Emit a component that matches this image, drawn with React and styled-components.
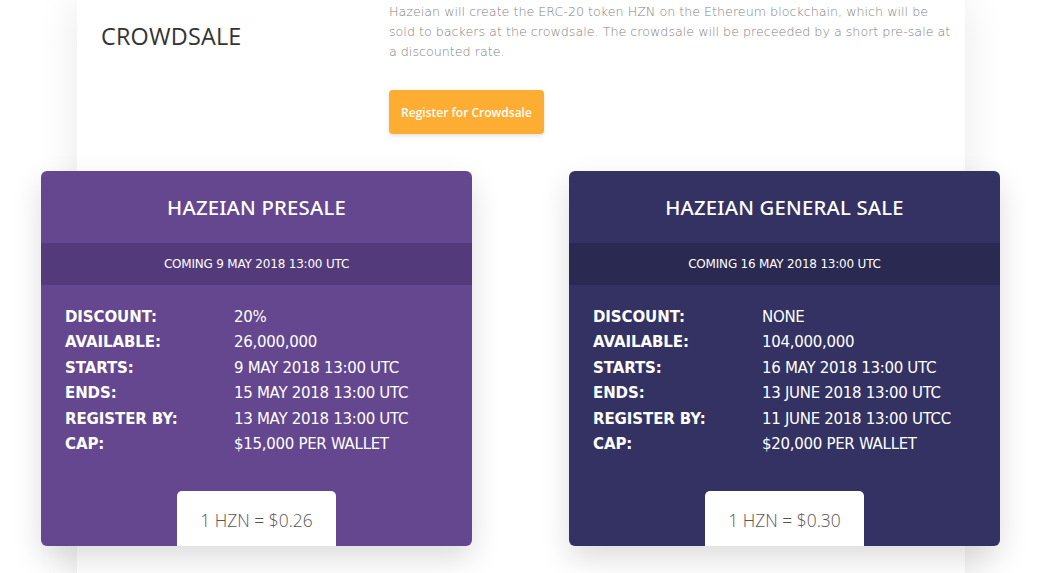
import React from "react";
import styled, { createGlobalStyle } from "styled-components";

const Global = createGlobalStyle`
  html, body { margin: 0; padding: 0; background: #ffffff; }
  body { width: 1043px; height: 573px; overflow: hidden; }
  * { box-sizing: border-box; }
`;

const Page = styled.div`
  width: 1043px;
  height: 573px;
  overflow: hidden;
  display: flex;
  justify-content: flex-start;
  padding-left: 77px;
`;

const Panel = styled.section`
  width: 888px;
  min-height: 640px;
  background: #fff;
  box-shadow: 0 0 40px rgba(0, 0, 0, 0.09);
  padding: 2px 0 0 24px;
  display: flex;
  flex-direction: column;
`;

const Intro = styled.div`
  display: grid;
  grid-template-columns: 288px 566px;
`;

const Heading = styled.h2`
  margin: 18px 0 0;
  font-family: "Open Sans", sans-serif;
  font-weight: 400;
  font-size: 23.4px;
  line-height: 32px;
  color: #333;
  letter-spacing: 0.2px;
`;

const Copy = styled.div`
  display: flex;
  flex-direction: column;
  align-items: flex-start;
`;

const Para = styled.p`
  margin: 0;
  font-family: "DejaVu Sans", sans-serif;
  font-weight: 200;
  font-size: 12.7px;
  line-height: 20px;
  color: #7f7f7f;
`;

const Button = styled.button`
  margin-top: 28px;
  width: 155px;
  height: 44px;
  border: 0;
  border-radius: 4px;
  background: #fdad31;
  color: #fff;
  font-family: "Open Sans", sans-serif;
  font-weight: 600;
  font-size: 12px;
  box-shadow: 0 2px 4px rgba(0, 0, 0, 0.12);
  padding: 0;
`;

const CardRow = styled.div`
  margin: 37px 0 0 -60px;
  width: 959px;
  display: flex;
  justify-content: space-between;
`;

const Card = styled.article`
  width: 431px;
  height: 375px;
  border-radius: 6px;
  background: ${(p) => p.$bg};
  box-shadow: 0 12px 30px rgba(0, 0, 0, 0.14);
  display: flex;
  flex-direction: column;
  overflow: hidden;
  color: #fff;
`;

const CardTitle = styled.h3`
  margin: 0;
  height: 72px;
  display: flex;
  align-items: center;
  justify-content: center;
  font-family: "Noto Sans", sans-serif;
  font-weight: 500;
  font-size: 20.3px;
  letter-spacing: 0.2px;
`;

const Band = styled.div`
  height: 42px;
  background: ${(p) => p.$bg};
  display: flex;
  align-items: center;
  justify-content: center;
  font-family: "DejaVu Sans", sans-serif;
  font-size: 12px;
  letter-spacing: -0.2px;
`;

const Body = styled.div`
  flex: 1;
  padding: 20px 24px 0;
  display: flex;
  flex-direction: column;
`;

const Grid = styled.dl`
  margin: 0;
  display: grid;
  grid-template-columns: 169px 1fr;
  font-family: "DejaVu Sans", sans-serif;
  font-size: 15px;
  line-height: 25.4px;
`;

const Term = styled.dt`
  font-weight: 700;
  letter-spacing: -0.1px;
`;

const Value = styled.dd`
  margin: 0;
  font-weight: 400;
  letter-spacing: -0.3px;
`;

const Price = styled.div`
  margin: auto auto 0;
  width: 159px;
  height: 55px;
  background: #fff;
  border-radius: 5px 5px 0 0;
  display: flex;
  align-items: center;
  justify-content: center;
  font-family: "Open Sans", sans-serif;
  font-weight: 300;
  font-size: 17.4px;
  color: #555;
  padding-top: 2px;
`;

const sales = [
  {
    title: "HAZEIAN PRESALE",
    coming: "COMING 9 MAY 2018 13:00 UTC",
    bg: "#65478f",
    band: "#533a7b",
    rows: [
      ["DISCOUNT:", "20%"],
      ["AVAILABLE:", "26,000,000"],
      ["STARTS:", "9 MAY 2018 13:00 UTC"],
      ["ENDS:", "15 MAY 2018 13:00 UTC"],
      ["REGISTER BY:", "13 MAY 2018 13:00 UTC"],
      ["CAP:", "$15,000 PER WALLET"],
    ],
    price: "1 HZN = $0.26",
  },
  {
    title: "HAZEIAN GENERAL SALE",
    coming: "COMING 16 MAY 2018 13:00 UTC",
    bg: "#333262",
    band: "#2a2951",
    rows: [
      ["DISCOUNT:", "NONE"],
      ["AVAILABLE:", "104,000,000"],
      ["STARTS:", "16 MAY 2018 13:00 UTC"],
      ["ENDS:", "13 JUNE 2018 13:00 UTC"],
      ["REGISTER BY:", "11 JUNE 2018 13:00 UTCC"],
      ["CAP:", "$20,000 PER WALLET"],
    ],
    price: "1 HZN = $0.30",
  },
];

export default function App() {
  return (
    <>
      <Global />
      <Page>
        <Panel>
          <Intro>
            <Heading>CROWDSALE</Heading>
            <Copy>
              <Para>
                Hazeian will create the ERC-20 token HZN on the Ethereum blockchain, which will be
                sold to backers at the crowdsale. The crowdsale will be preceeded by a short pre-sale at
                a discounted rate.
              </Para>
              <Button>Register for Crowdsale</Button>
            </Copy>
          </Intro>
          <CardRow>
            {sales.map((s) => (
              <Card key={s.title} $bg={s.bg}>
                <CardTitle>{s.title}</CardTitle>
                <Band $bg={s.band}>{s.coming}</Band>
                <Body>
                  <Grid>
                    {s.rows.map(([k, v]) => (
                      <React.Fragment key={k}>
                        <Term>{k}</Term>
                        <Value>{v}</Value>
                      </React.Fragment>
                    ))}
                  </Grid>
                  <Price>{s.price}</Price>
                </Body>
              </Card>
            ))}
          </CardRow>
        </Panel>
      </Page>
    </>
  );
}
